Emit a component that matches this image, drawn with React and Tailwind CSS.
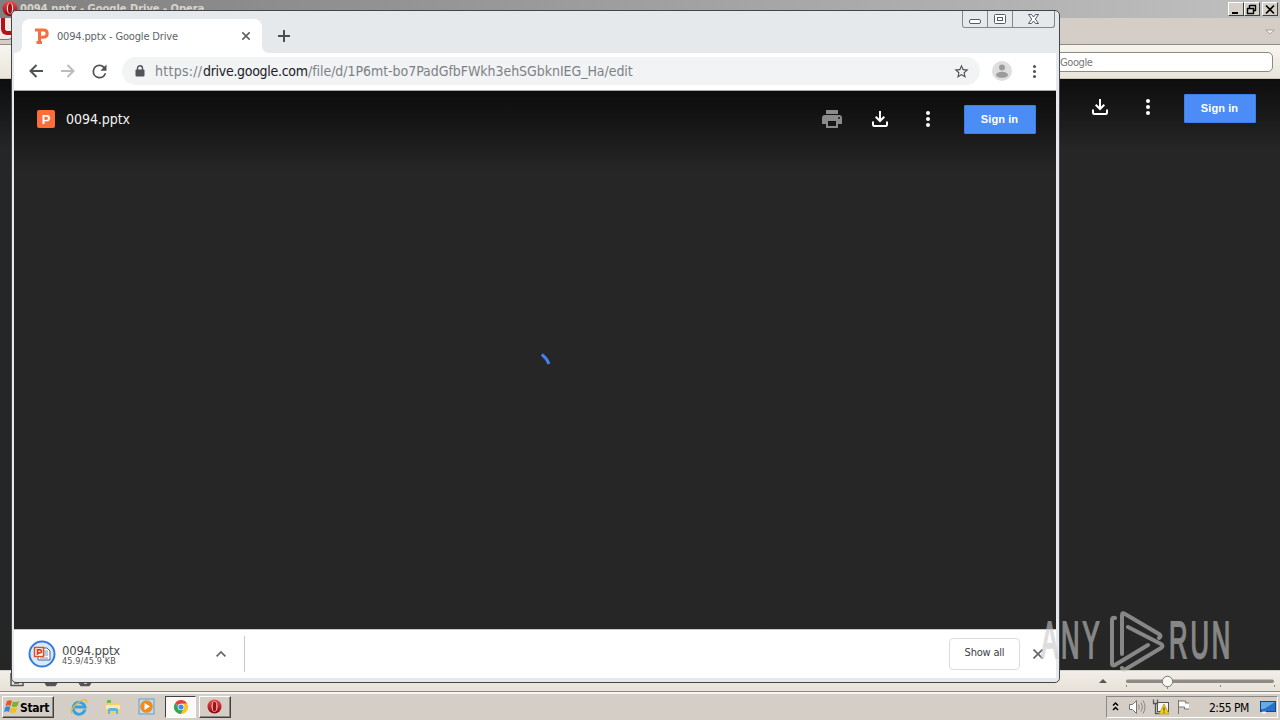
function DownloadIcon({ className }) {
  return (
    <svg viewBox="0 0 18 18" className={className} fill="none" stroke="#fff" strokeWidth="2">
      <path d="M9 1v9.5M4.7 6.7 9 11l4.3-4.3M2 11.5v3.2q0 1.3 1.3 1.3h11.4q1.3 0 1.3-1.3v-3.2" />
    </svg>
  );
}

function Dots({ className, r = 2 }) {
  return (
    <svg viewBox="0 0 6 18" className={className} fill="currentColor">
      <circle cx="3" cy="3" r={r} />
      <circle cx="3" cy="9" r={r} />
      <circle cx="3" cy="15" r={r} />
    </svg>
  );
}

function OperaIcon({ className }) {
  return (
    <svg viewBox="0 0 16 16" className={className}>
      <defs>
        <linearGradient id="opera" x2="0" y2="1">
          <stop stopColor="#f05050" />
          <stop offset="1" stopColor="#8e0308" />
        </linearGradient>
      </defs>
      <ellipse cx="8" cy="8" rx="7.5" ry="7.5" fill="url(#opera)" />
      <ellipse cx="8" cy="8" rx="3.2" ry="5.8" fill="#f4dcdc" />
      <ellipse cx="8" cy="8" rx="2" ry="5.3" fill="#a80e16" />
    </svg>
  );
}

function SignIn() {
  return (
    <div className="flex h-[29px] w-[72px] items-center justify-center rounded-[1px] border border-[#3f7de8] bg-[#4b8cf7] pr-[1px] font-['Liberation_Sans'] text-[11px] font-bold tracking-[0.1px] text-white">
      Sign in
    </div>
  );
}

function ClassicButton({ children }) {
  return (
    <div className="flex h-[14px] w-4 items-center justify-center border border-t-white border-l-white border-r-[#404040] border-b-[#404040] bg-[#d4d0c8]">
      <svg viewBox="0 0 12 11" className="h-[11px] w-3 shrink-0" fill="none" stroke="#000">
        {children}
      </svg>
    </div>
  );
}

function OperaWindow() {
  return (
    <div className="flex h-[691px] w-full flex-col">
      <div className="flex h-[18px] items-start bg-linear-to-r from-[#808080] to-[#c0c0c0]">
        <OperaIcon className="ml-[2px] h-[17px] w-[16px]" />
        <span className="ml-[2px] mt-[1px] text-[11px] font-bold leading-[16px] tracking-[0px] text-[#d8d4cc]">0094.pptx - Google Drive - Opera</span>
        <div className="ml-auto mr-[2px] mt-[2px] flex">
          <ClassicButton>
            <path d="M2 9h6" strokeWidth="2" />
          </ClassicButton>
          <ClassicButton>
            <path d="M4 1.5h6M3.5 4V1M9.5 1v6M8 6.5h2M1 4.5h7M1.5 4v6M7.5 4v6M1 9.5h7" strokeWidth="1.4" />
          </ClassicButton>
          <div className="w-[2px]" />
          <ClassicButton>
            <path d="m2 1.5 8 8M10 1.5l-8 8" strokeWidth="1.7" />
          </ClassicButton>
        </div>
      </div>
      <div className="flex h-[27px] items-start border-b border-[#8f8b84] bg-[#d4cec7]">
        <div className="-ml-[6px] h-[22px] w-[20px] rounded-b-md border border-t-0 border-[#777] bg-[#efebe4]">
          <div className="ml-[6px] h-[17px] w-[12px] rounded-bl-md border-b-4 border-l-4 border-[#b5101a]" />
        </div>
        <svg viewBox="0 0 10 6" className="ml-auto mr-[5px] mt-[11px] h-[6px] w-[10px]" fill="#f4f1ec" stroke="#a8a29a">
          <path d="M.8 1h8.4L5 5z" />
        </svg>
      </div>
      <div className="flex h-[34px] items-center justify-end border-b border-[#c9c4b4] bg-linear-to-b from-[#f7f5ef] to-[#e9e5da] pr-[7px]">
        <div className="h-[20px] w-[223px] rounded-[5px] border border-[#8c8a82] bg-white pl-[9px] text-[11px] leading-[19px] tracking-[-0.4px] text-[#777]">Google</div>
      </div>
      <div className="flex h-[591px] items-start justify-end bg-linear-to-b from-[#0d0d0d] to-[#262626] to-[70px] pr-6 pt-[15px]">
        <DownloadIcon className="mr-[36px] mt-[4px] h-[18px] w-[18px]" />
        <Dots className="mr-[33px] mt-[4px] h-[18px] w-[6px] text-white" />
        <SignIn />
      </div>
      <div className="flex h-[21px] items-start border-t border-[#d5d0c6] bg-linear-to-b from-[#f2eee8] to-[#e7e1d7]">
        <svg viewBox="0 0 100 16" className="h-4 w-[100px]" fill="none" stroke="#555" strokeWidth="1.5">
          <path d="M11 2v12.5h12V11M14 12h5" />
          <path d="M45 11.5h12l-2 3h-8z" fill="#555" />
          <path d="M79 11.5h12l-2 3h-8z" fill="#555" />
          <path d="M84 12h3" stroke="#eee" />
        </svg>
        <svg viewBox="0 0 184 20" className="ml-auto h-5 w-[184px]">
          <path d="m3 12 4-4 4 4z" fill="#555" />
          <rect x="30" y="8.5" width="148" height="3.5" rx="1.7" fill="#8f8b86" />
          <path d="M30.5 14v2M71.5 15v3M124.500 14v2M178.500 14v2" stroke="#8d8982" />
          <circle cx="71.5" cy="10.5" r="5.2" fill="#faf8f5" stroke="#77736e" />
        </svg>
      </div>
    </div>
  );
}

function WindowButtons() {
  return (
    <div className="ml-auto mr-[1px] flex h-[17px] w-[93px] rounded-b-[3px] border border-t-0 border-[#83878c] text-[#555b63]">
      <svg viewBox="0 0 91 16" className="h-4 w-[91px]" fill="none" stroke="currentColor">
        <path d="M24.5 0v16M49.5 0v16" stroke="#83878c" />
        <rect x="6.5" y="8.5" width="11" height="4" rx="1.5" fill="#fff" />
        <rect x="31.5" y="3.5" width="11" height="9" rx="1" fill="#fff" />
        <rect x="34.5" y="6.5" width="5" height="3" />
        <path d="M65.500 3.500h3l2 2.500 2-2.500h3L72.300 8l3.200 4.500h-3l-2-2.500-2 2.500h-3L68.700 8z" fill="#fff" />
      </svg>
    </div>
  );
}

function TabStrip() {
  return (
    <div className="flex h-[42px] items-start pl-[8px]">
      <div className="relative mt-[8px] flex h-[34px] w-[240px] items-center rounded-t-lg bg-white">
        <svg viewBox="0 0 256 8" className="absolute -left-2 bottom-0 h-2 w-[256px]" fill="#fff">
          <path d="M0 8q8 0 8-8v8zM256 8q-8 0-8-8v8z" />
        </svg>
        <svg viewBox="0 0 14 16" className="ml-[13px] h-4 w-[14px]" fill="none" stroke="#f4703f" strokeWidth="3">
          <path d="M0 2h8.500q3.700 0 3.700 3.600T8.500 9.200H5M4.500 2v13M1.500 14.500H7" />
        </svg>
        <span className="ml-[8px] mt-[2px] text-[11px] leading-[16px] tracking-[-0.17px] text-[#606468]">0094.pptx - Google Drive</span>
        <svg viewBox="0 0 8 8" className="ml-auto mr-[12px] h-2 w-2" stroke="#5f6368" strokeWidth="1.6">
          <path d="m.3.3 7.400 7.400M7.700.3.3 7.700" />
        </svg>
      </div>
      <svg viewBox="0 0 12 12" className="ml-[16px] mt-[19px] h-3 w-3" stroke="#4a4d51" strokeWidth="2">
        <path d="M6 0v12M0 6h12" />
      </svg>
      <WindowButtons />
    </div>
  );
}

function Toolbar() {
  return (
    <div className="flex h-[38px] items-center border-b border-[#a6a6a6] bg-white pb-[1px] text-[#5f6368]">
      <svg viewBox="0 0 14 14" className="ml-[15px] h-[14px] w-[14px]" fill="none" stroke="#4f5256" strokeWidth="2">
        <path d="M14 7H1.5M7.500 1l-6 6 6 6" />
      </svg>
      <svg viewBox="0 0 14 14" className="ml-[18px] h-[14px] w-[14px]" fill="none" stroke="#babcbe" strokeWidth="2">
        <path d="M0 7h12.500M6.500 1l6 6-6 6" />
      </svg>
      <svg viewBox="0 0 24 24" className="ml-[14px] h-[21px] w-[21px]" fill="#505357">
        <path d="M17.650 6.350A7.960 7.960 0 0 0 12 4a8 8 0 1 0 7.730 10h-2.080A6 6 0 1 1 12 6c1.660 0 3.140.690 4.220 1.780L13 11h7V4z" />
      </svg>
      <div className="ml-[12px] flex h-[28px] w-[858px] items-center rounded-full bg-[#f1f3f4]">
        <svg viewBox="0 0 10 12" className="ml-[13px] h-3 w-[10px]">
          <rect x="0.5" y="4.5" width="9" height="7" rx="1" fill="#505357" />
          <path d="M2.500 5V3.300a2.500 2.500 0 0 1 5 0V5" fill="none" stroke="#505357" strokeWidth="1.400" />
        </svg>
        <div className="ml-[10px] flex text-[14px] leading-[20px] text-[#7d8186]">
          <span className="w-[48px] tracking-[0.28px]">https://</span>
          <span className="w-[105px] tracking-[-0.3px] text-[#202124]">drive.google.com</span>
          <span className="tracking-[-0.05px]">/file/d/1P6mt-bo7PadGfbFWkh3ehSGbknIEG_Ha/edit</span>
        </div>
        <svg viewBox="0 0 24 24" className="ml-auto mr-[10px] h-[17px] w-[17px]" fill="#505357">
          <path d="m22 9.240-7.190-.620L12 2 9.190 8.630 2 9.240l5.460 4.730L5.820 21 12 17.270 18.180 21l-1.630-7.030zM12 15.400l-3.760 2.270 1-4.280-3.320-2.880 4.380-.380L12 6.100l1.710 4.040 4.380.380-3.320 2.880 1 4.280z" />
        </svg>
      </div>
      <svg viewBox="0 0 20 20" className="ml-[12px] h-5 w-5">
        <circle cx="10" cy="10" r="10" fill="#dedede" />
        <circle cx="10" cy="6.5" r="3" fill="#9c9c9c" />
        <ellipse cx="10" cy="13.8" rx="6" ry="3" fill="#9c9c9c" />
      </svg>
      <Dots className="ml-[20px] h-[15px] w-[5px] text-[#505357]" r={1.8} />
    </div>
  );
}

function Viewer() {
  return (
    <div className="flex h-[538px] flex-col bg-linear-to-b from-[#0c0c0c] to-[#262626] to-[80px]">
      <div className="flex h-[56px] items-center pl-[23px] pr-[20px]">
        <div className="flex h-[18px] w-[18px] items-center justify-center rounded-[2px] bg-[#fb6e3c] font-['Liberation_Sans'] text-[13px] font-bold leading-none text-white">P</div>
        <span className="ml-[11px] text-[14px] leading-[20px] tracking-[-0.05px] text-[#f2f2f2]">0094.pptx</span>
        <svg viewBox="0 0 20 18" className="ml-auto mr-[29px] h-[18px] w-5" fill="#8b8b8b">
          <path fillRule="evenodd" d="M4 0h12v4H4zM3 5h14q3 0 3 3v6h-4v4H4v-4H0V8q0-3 3-3zm3 6v5h8v-5zM17 7a1 1 0 1 0 0 2 1 1 0 0 0 0-2z" />
        </svg>
        <DownloadIcon className="mr-[36px] h-[18px] w-[18px]" />
        <Dots className="mr-[33px] h-[18px] w-[6px] text-white" />
        <SignIn />
      </div>
      <svg viewBox="0 0 12 14" className="ml-[526px] mt-[205px] h-[14px] w-3" fill="none" stroke="#4381ee" strokeWidth="3">
        <path d="M1.800 2.500q5 3.700 7.200 9.500" />
      </svg>
    </div>
  );
}

function DownloadShelf() {
  return (
    <div className="flex h-[49px] items-center border-t border-[#c8c8c8] bg-white pb-[1px]">
      <svg viewBox="0 0 28 28" className="ml-[14px] h-7 w-7">
        <circle cx="14" cy="14" r="12.500" fill="#dce9fb" stroke="#2f7de1" strokeWidth="2" />
        <path d="M10 8h9l3 3v9H10z" fill="#fff" stroke="#4a6294" />
        <path d="M16 11h4M16 13h4M16 15h4M12 18h8" stroke="#7d91bd" />
        <rect x="6.500" y="7.500" width="9" height="9" fill="#fff" stroke="#d6522c" strokeWidth="1.500" />
        <path d="M9.500 15V9.800H12a1.500 1.500 0 0 1 0 3H9.500" fill="none" stroke="#cf4520" strokeWidth="1.700" />
      </svg>
      <div className="ml-[6px] mt-[3px] flex flex-col">
        <span className="text-[13px] leading-[13px] tracking-[-0.2px] text-[#4a4a4a]">0094.pptx</span>
        <span className="text-[9px] leading-[9px] tracking-[0.15px] text-[#555]">45.9/45.9 KB</span>
      </div>
      <svg viewBox="0 0 10 6" className="ml-auto mr-[18px] h-[6px] w-[10px]" fill="none" stroke="#666" strokeWidth="1.700">
        <path d="m.6 5.400 4.400-4.400 4.400 4.400" />
      </svg>
      <div className="h-9 w-px bg-[#c8c8c8]" />
      <div className="ml-[704px] flex h-8 w-[71px] items-center justify-center rounded border border-[#dadce0] text-[11px] tracking-[-0.2px] text-[#3c4043]">Show all</div>
      <svg viewBox="0 0 10 10" className="ml-[13px] mr-[13px] h-[10px] w-[10px]" stroke="#666" strokeWidth="1.700">
        <path d="m.5.5 9 9M9.500.5l-9 9" />
      </svg>
    </div>
  );
}

function ChromeWindow() {
  return (
    <div className="absolute left-[11px] top-[10px] h-[673px] w-[1049px] overflow-hidden rounded-[5px] border border-[#43464a] bg-[#e6e9ec] pl-[2px] pr-[3px]">
      <TabStrip />
      <Toolbar />
      <Viewer />
      <DownloadShelf />
    </div>
  );
}

function Taskbar() {
  return (
    <div className="flex h-[29px] items-center border-t border-[#8f8b84] bg-[#d4cec7] pl-[2px] pr-[2px] pt-[1px] shadow-[inset_0_2px_0_#f8f6f2]">
      <div className="flex h-[22px] w-[52px] items-center border border-t-white border-l-white border-r-[#404040] border-b-[#404040] pl-[1px] shadow-[inset_-1px_-1px_0_#8c8882]">
        <svg viewBox="0 0 16 15" className="h-[15px] w-4 shrink-0">
          <path d="M3 2q3-1.500 5 0L6.500 7q-2-1.400-5 0z" fill="#e85522" />
          <path d="M9 2.500q3 1.400 6-.5l-1.500 5q-3 1.700-6 .2z" fill="#79b42c" />
          <path d="M1.300 8q3-1.300 5 0L5 13q-2-1.500-5 0z" fill="#3b86d2" />
          <path d="M7.200 8.500q3 1.300 6-.3l-1.500 5q-3 1.500-6 0z" fill="#f4bd24" />
        </svg>
        <span className="mt-[2px] text-[12px] font-bold leading-[16px] tracking-[-0.35px] text-black">Start</span>
      </div>
      <svg viewBox="0 0 18 18" className="ml-[16px] h-[18px] w-[18px]" fill="none">
        <path d="M15 11.500A6 6 0 1 1 15 9H5" stroke="#35a2de" strokeWidth="2.800" />
        <path d="M2 15.500C-1 11 10 1 15.500 2q1.800.5.7 3" stroke="#e9b83c" strokeWidth="1.300" />
      </svg>
      <svg viewBox="0 0 18 18" className="ml-[16px] h-[18px] w-[18px]">
        <path d="M2 3h6l1 2h7v10H2z" fill="#f0cf6c" />
        <path d="M3 2h4v3H3z" fill="#72b26b" />
        <path d="M2 7h14v4H2z" fill="#faeab0" />
        <path d="M4 16v-4q0-2 2-2h6q2 0 2 2v4h-2v-3H6v3z" fill="#61b3df" />
      </svg>
      <svg viewBox="0 0 18 18" className="ml-[15px] h-[18px] w-[18px]">
        <rect x="2" y="1" width="15" height="15" fill="#bcdcf0" stroke="#5d9fc9" />
        <circle cx="9.500" cy="8.500" r="6.300" fill="#f28a1c" />
        <path d="M7.500 5v7l5.500-3.500z" fill="#fff" />
      </svg>
      <div className="ml-[10px] flex h-[22px] w-[31px] items-center justify-center border border-t-[#404040] border-l-[#404040] border-r-white border-b-white bg-[#faf9f7]">
        <svg viewBox="0 0 14 14" className="h-[14px] w-[14px]">
          <path d="M7 7 .9 3.500a7 7 0 0 1 12.200 0z" fill="#e04436" />
          <path d="M7 7 .9 3.500A7 7 0 0 0 7 14l3-5.200z" fill="#36a553" />
          <path d="M7 3.500h6.100A7 7 0 0 1 7 14l3-5.300z" fill="#fbc419" />
          <circle cx="7" cy="7" r="3.300" fill="#fff" />
          <circle cx="7" cy="7" r="2.600" fill="#4285f4" />
        </svg>
      </div>
      <div className="ml-[3px] flex h-[22px] w-[32px] items-center justify-center border border-t-white border-l-white border-r-[#404040] border-b-[#404040] pr-[2px] shadow-[inset_-1px_-1px_0_#8c8882]">
        <OperaIcon className="h-[15px] w-[15px]" />
      </div>
      <div className="ml-auto flex h-[22px] w-[172px] items-center border border-t-[#8c8882] border-l-[#8c8882] border-r-white border-b-white">
        <svg viewBox="0 0 82 20" className="h-5 w-[82px] shrink-0" fill="none">
          <path d="m6 8.500 2.500-2.500L11 8.500M6 13l2.500-2.500L11 13" stroke="#000" strokeWidth="1.500" />
          <path d="M22.500 7.500h3l4-4v13l-4-4h-3z" fill="#fff" stroke="#77736e" />
          <path d="M31.500 7.500q1.500 2.500 0 5M34 5.500q3 4.500 0 9M36 3.500q4 6.500 0 13" stroke="#8a8681" />
          <rect x="50.500" y="5.500" width="11" height="9" fill="#f5f5f5" stroke="#555" />
          <path d="M46.500 2.500v4h4v-4M48.500 6.500v10h4" stroke="#555" strokeWidth="1.300" />
          <path d="m57 7 5 10H52z" fill="#f6cf19" stroke="#a88f14" strokeWidth=".7" />
          <path d="M57 10.500v3M57 14.500v1.200" stroke="#222" />
          <path d="M71.500 17V3.500M71.500 4h7v2h6l-2 4 1 2h-6v-2h-6" fill="#fff" stroke="#77736e" />
          <path d="M71.500 3v14" stroke="#77736e" />
        </svg>
        <span className="ml-[20px] mt-[2px] whitespace-nowrap text-[12px] leading-[16px] tracking-[-0.55px] text-black">2:55 PM</span>
        <svg viewBox="0 0 16 14" className="ml-auto mr-[1px] h-[14px] w-4">
          <rect x="0.500" y="1.500" width="15" height="10" fill="#2671c9" stroke="#184779" />
          <path d="M1 2h14L4 9H1z" fill="#68aae8" />
          <path d="M2 12.500h4" stroke="#eef6ff" strokeWidth="2" />
        </svg>
      </div>
    </div>
  );
}

function Watermark() {
  return (
    <div className="absolute left-[1041px] top-[606px] h-[68px] w-[194px] text-[#c8c8c8] opacity-60">
      <span className="absolute left-0 top-[6px] origin-left scale-x-50 whitespace-nowrap font-['Liberation_Sans'] text-[51px] leading-[58px] tracking-[6px] [-webkit-text-stroke:2px_#c8c8c8]">ANY</span>
      <svg viewBox="0 0 58 64" className="absolute left-[68px] top-[3px] h-16 w-[58px]" fill="none" stroke="currentColor" strokeWidth="4" strokeLinejoin="round" strokeLinecap="round">
        <path d="M6 9Q3 8 3 11V55q0 2 3 1L39 36M13 45V6q0-3 3-1L50 25q3 2 0 4M19 18l33 17q3 2 0 4L17 60q-3 2-4-1" />
      </svg>
      <span className="absolute left-[128px] top-[6px] origin-left scale-x-50 whitespace-nowrap font-['Liberation_Sans'] text-[51px] leading-[58px] tracking-[6px] [-webkit-text-stroke:2px_#c8c8c8]">RUN</span>
    </div>
  );
}

export default function App() {
  return (
    <div className="relative flex h-[720px] w-[1280px] flex-col overflow-hidden font-['DejaVu_Sans_Condensed','DejaVu_Sans',sans-serif]">
      <OperaWindow />
      <Taskbar />
      <ChromeWindow />
      <Watermark />
    </div>
  );
}
